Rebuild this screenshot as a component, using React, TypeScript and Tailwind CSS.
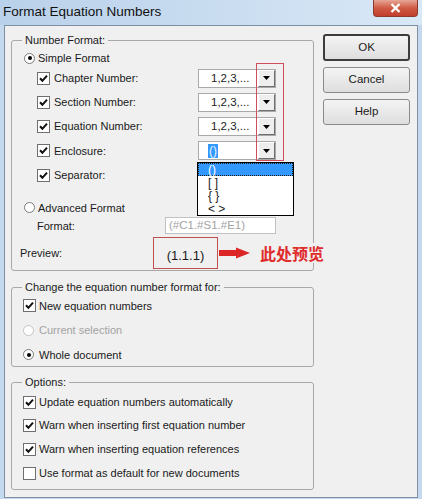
import type { ReactNode } from "react"

const Check = ({ on }: { on: boolean }) => (
	<span className="w-[13px] h-[13px] shrink-0 border border-[#6f6f6f] bg-white flex items-center justify-center">
		{on && (
			<svg width="9" height="9" viewBox="0 0 9 9">
				<path d="M1 4.2 L3.4 6.8 L8 1.6" stroke="#111" strokeWidth="2" fill="none" />
			</svg>
		)}
	</span>
)

const Radio = ({ on, disabled }: { on: boolean; disabled?: boolean }) => (
	<span
		className={
			disabled
				? "w-[11px] h-[11px] shrink-0 rounded-full border border-[#c4c4c4] bg-white flex items-center justify-center"
				: "w-[11px] h-[11px] shrink-0 rounded-full border border-[#7a7a7a] bg-white flex items-center justify-center"
		}
	>
		{on && <span className="w-[4px] h-[4px] rounded-full bg-black" />}
	</span>
)

const Arrow = () => (
	<div className="w-[17px] h-[17px] border border-t-white border-l-white border-r-[#6f6f6f] border-b-[#6f6f6f] bg-[#eeeeee] flex items-center justify-center">
		<svg width="7" height="4" viewBox="0 0 7 4">
			<path d="M0 0 H7 L3.5 4 Z" fill="#000" />
		</svg>
	</div>
)

const Combo = ({ children }: { children: ReactNode }) => (
	<div className="w-[78px] h-[19px] border border-[#a9a9a9] bg-white flex">
		<div className="flex-1 flex items-center pl-[12px] text-[11.5px] text-[#222]">{children}</div>
		<Arrow />
	</div>
)

const Legend = ({ children }: { children: ReactNode }) => (
	<legend className="ml-[10px] px-[3px] leading-[14px] text-[11px] text-[#1a1a1a]">{children}</legend>
)

const Button = ({ label, def }: { label: string; def?: boolean }) => (
	<div
		className={
			def
				? "w-[87px] h-[27px] rounded-[3px] border-2 border-[#3c3c3c] bg-gradient-to-b from-[#f4f4f4] to-[#dedede] flex items-center justify-center text-[11.5px]"
				: "w-[87px] h-[26px] rounded-[3px] border border-[#8a8a8a] bg-gradient-to-b from-[#f4f4f4] to-[#dedede] flex items-center justify-center text-[11.5px]"
		}
	>
		{label}
	</div>
)

const rows = [
	{ label: "Chapter Number:", value: "1,2,3,..." },
	{ label: "Section Number:", value: "1,2,3,..." },
	{ label: "Equation Number:", value: "1,2,3,..." },
]

export default function App() {
	return (
		<div className="w-[422px] h-[499px] bg-[#c5d9ee] flex flex-col overflow-hidden font-['Liberation_Sans',Arial,sans-serif] text-[#1a1a1a]">
			{/* title bar */}
			<div className="h-[25px] shrink-0 flex justify-between bg-gradient-to-r from-[#b9d1ea] to-[#d9e8f6]">
				<div className="pl-[3px] flex items-center text-[13.5px] text-[#111]">Format Equation Numbers</div>
				<div className="mr-[4px] w-[45px] h-[17px] rounded-b-[4px] border border-t-0 border-[#8d3a2e] bg-gradient-to-b from-[#e6a596] via-[#cf5a45] to-[#c03e2a] flex items-center justify-center">
					<svg width="11" height="10" viewBox="0 0 11 10">
						<path d="M1.5 1 L9.5 9 M9.5 1 L1.5 9" stroke="#fff" strokeWidth="2.4" />
					</svg>
				</div>
			</div>

			{/* client */}
			<div className="mx-[4px] mb-[1px] flex-1 border border-[#7d8fa3] bg-[#f0f0f0] flex gap-[9px] pl-[6px] pt-[7px] text-[11px]">
				<div className="w-[303px] shrink-0 flex flex-col">
					{/* Number Format */}
					<fieldset className="border border-[#a8a8a8] rounded-[3px] pb-[1px] min-w-0">
						<Legend>Number Format:</Legend>
						<div className="flex flex-col">
							<div className="h-[19px] pt-[3px] pl-[12px] flex items-center gap-[3px]">
								<Radio on />
								<span>Simple Format</span>
							</div>
							{rows.map((r, i) => (
								<div key={r.label} className="h-[24.25px] pl-[25px] flex items-center">
									<Check on />
									<span className="ml-[4px] w-[144px]">{r.label}</span>
									<div className="relative">
										<Combo>{r.value}</Combo>
										{i === 0 && (
											<div className="absolute left-[58px] top-[-6px] w-[28px] h-[98px] border border-[#d24b5c] z-10" />
										)}
									</div>
								</div>
							))}
							<div className="h-[24.25px] pl-[25px] flex items-center">
								<Check on />
								<span className="ml-[4px] w-[144px]">Enclosure:</span>
								<div className="relative">
									<div className="w-[78px] h-[19px] border border-[#a9a9a9] bg-white flex">
										<div className="flex-1 flex items-center pl-[9px] text-[12px]">
											<span className="bg-[#3399ff] text-[#eaf4ff] px-[1px] leading-[14px]">()</span>
										</div>
										<Arrow />
									</div>
									<div className="absolute left-[-1px] top-[21px] w-[97px] h-[54px] border border-black bg-white z-20 flex flex-col text-[12px]">
										<div className="h-[13px] bg-[#3399ff] border border-dotted border-[#1a1a1a] text-white flex items-center pl-[9px]">()</div>
										<div className="h-[13px] flex items-center pl-[10px]">[ ]</div>
										<div className="h-[13px] flex items-center pl-[10px]">{"{ }"}</div>
										<div className="h-[13px] flex items-center pl-[10px]">{"< >"}</div>
									</div>
								</div>
							</div>
							<div className="h-[24.25px] pl-[25px] flex items-center">
								<Check on />
								<span className="ml-[4px]">Separator:</span>
							</div>
							<div className="mt-[11px] h-[19px] pl-[12px] flex items-center gap-[3px]">
								<Radio on={false} />
								<span>Advanced Format</span>
							</div>
							<div className="h-[17px] pl-[25px] flex items-center">
								<span className="w-[128px]">Format:</span>
								<div className="w-[111px] h-[17px] border border-[#c2c2c2] bg-white flex items-center pl-[3px] text-[11.5px] text-[#a3a3a3]">
									(#C1.#S1.#E1)
								</div>
							</div>
							<div className="mt-[3px] h-[32px] pl-[8px] flex items-center whitespace-nowrap">
								<span className="w-[133px] shrink-0">Preview:</span>
								<div className="w-[65px] h-[32px] shrink-0 border border-[#c0504d] flex items-center justify-center pt-[4px] text-[13px]">
									(1.1.1)
								</div>
								<svg className="ml-[1px] shrink-0" width="32" height="12" viewBox="0 0 32 12">
									<rect x="0" y="3" width="19" height="6" fill="#dc2626" />
									<path d="M17 0.5 L31 6 L17 11.5 Z" fill="#dc2626" />
								</svg>
								<span className="ml-[9px] shrink-0 bg-[#f0f0f0] text-[16px] leading-[20px] font-bold text-[#e02b2b] font-['Noto_Sans_CJK_SC',sans-serif]">
									此处预览
								</span>
							</div>
						</div>
					</fieldset>

					{/* Change format for */}
					<fieldset className="mt-[9px] border border-[#a8a8a8] rounded-[3px]">
						<Legend>Change the equation number format for:</Legend>
						<div className="flex flex-col">
							<div className="h-[23px] pl-[11px] flex items-center gap-[3px]">
								<Check on />
								<span>New equation numbers</span>
							</div>
							<div className="h-[26px] pl-[11px] flex items-center gap-[5px] text-[#a3a3a3]">
								<Radio on={false} disabled />
								<span>Current selection</span>
							</div>
							<div className="h-[23px] pl-[11px] flex items-center gap-[5px]">
								<Radio on />
								<span>Whole document</span>
							</div>
						</div>
					</fieldset>

					{/* Options */}
					<fieldset className="mt-[8px] border border-[#a8a8a8] rounded-[3px] pt-[1px] pb-[4px]">
						<Legend>Options:</Legend>
						<div className="flex flex-col">
							{[
								["Update equation numbers automatically", true],
								["Warn when inserting first equation number", true],
								["Warn when inserting equation references", true],
								["Use format as default for new documents", false],
							].map(([t, on]) => (
								<div key={t as string} className="h-[23.67px] pl-[11px] flex items-center gap-[3px]">
									<Check on={on as boolean} />
									<span>{t as string}</span>
								</div>
							))}
						</div>
					</fieldset>
				</div>

				{/* buttons */}
				<div className="mt-[1px] flex flex-col gap-[6px]">
					<Button label="OK" def />
					<Button label="Cancel" />
					<Button label="Help" />
				</div>
			</div>
		</div>
	)
}
